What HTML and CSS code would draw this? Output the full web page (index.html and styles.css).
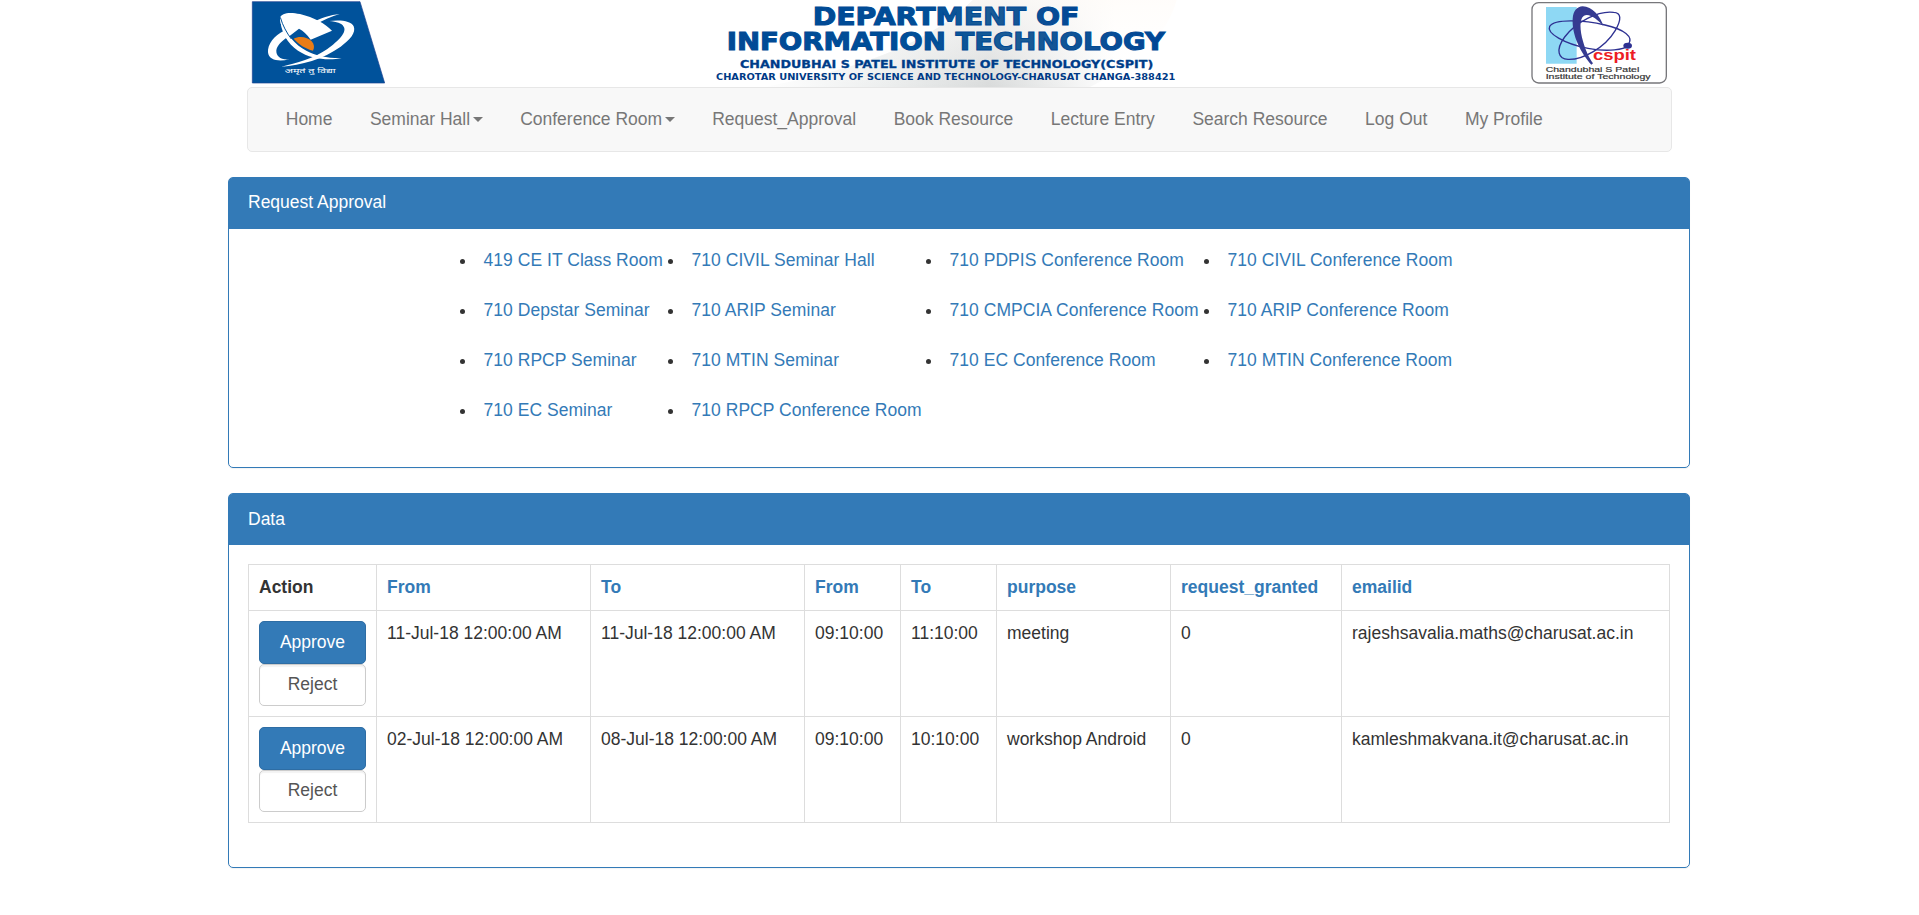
FILE: index.html
```html
<!DOCTYPE html>
<html lang="en">
<head>
<meta charset="utf-8">
<title>Request Approval</title>
<link rel="stylesheet" href="styles.css">
</head>
<body>
<div class="container">
  <header class="banner">
    <svg class="logo-university" viewBox="0 0 450 261">
      <path fill="#00529b" stroke="#1a3f8f" stroke-width="2" d="M22 5H345L419 249H22z"/>
      <g transform="translate(45 24)">
        <path fill="#fff" d="M60 29C64 15 88 11 120 18C162 28 197 48 216 68L152 95C141 79 129 68 117 62L78 92L70 65C64 53 59 40 60 29z"/>
        <path fill="#fff" d="M154 46C180 31 212 20 239 18C216 25 188 36 166 51zM208 39C240 34 275 39 281 55C289 75 269 96 242 116C190 153 123 172 64 176C108 166 164 150 201 124C235 99 262 72 251 56C245 44 230 42 208 39z"/>
        <path fill="#fff" d="M72 68C43 82 22 109 24 133C26 158 59 162 87 154C61 156 48 145 49 127C51 112 66 99 81 88z"/>
        <path fill="#fff" d="M61 29C61 70 82 106 114 128C153 154 207 158 245 150C206 151 168 144 139 128C105 110 77 79 61 29z"/>
        <path fill="none" stroke="#00529b" stroke-width="3" d="M61 28C68 53 80 74 94 93"/>
        <path fill="#e87c16" d="M101 92C118 82 144 87 155 100C163 109 164 119 159 128C136 122 116 109 101 92z"/>
      </g>
      <text class="motto" x="119" y="220" textLength="153" lengthAdjust="spacingAndGlyphs">अमृतं तु विद्या</text>
    </svg>
    <svg class="department" viewBox="0 0 1665 261">
      <defs>
        <linearGradient id="sweep" x1="0" y1="0" x2="1" y2="0">
          <stop offset="0" stop-color="#fff"/>
          <stop offset=".3" stop-color="#eceeee"/>
          <stop offset=".55" stop-color="#d9dbdb"/>
          <stop offset=".85" stop-color="#fff"/>
        </linearGradient>
        <linearGradient id="fade" x1="0" y1="0" x2="0" y2="1">
          <stop offset="0" stop-color="#fffcf9" stop-opacity=".8"/>
          <stop offset="1" stop-color="#fff" stop-opacity="0"/>
        </linearGradient>
        <linearGradient id="ink" x1="0" y1="0" x2="1" y2="0">
          <stop offset="0" stop-color="#004a96"/>
          <stop offset=".45" stop-color="#004f99"/>
          <stop offset=".65" stop-color="#1c5c95"/>
          <stop offset="1" stop-color="#004596"/>
        </linearGradient>
      </defs>
      <path fill="url(#sweep)" d="M250 261Q700 180 880 0H1490Q1450 150 1230 261z"/>
      <path fill="url(#fade)" d="M250 261Q700 180 880 0H1490Q1450 150 1230 261z"/>
      <g class="department-text">
        <text class="line-large" x="398" y="76" textLength="800" lengthAdjust="spacingAndGlyphs">DEPARTMENT OF</text>
        <text class="line-large" x="140" y="151" textLength="1315" lengthAdjust="spacingAndGlyphs">INFORMATION TECHNOLOGY</text>
        <text class="line-medium" x="180" y="204" textLength="1240" lengthAdjust="spacingAndGlyphs">CHANDUBHAI S PATEL INSTITUTE OF TECHNOLOGY(CSPIT)</text>
        <text class="line-small" x="108" y="241" textLength="1378" lengthAdjust="spacingAndGlyphs">CHAROTAR UNIVERSITY OF SCIENCE AND TECHNOLOGY-CHARUSAT CHANGA-388421</text>
      </g>
    </svg>
    <svg class="logo-institute" viewBox="0 0 480 261">
      <rect x="36" y="8" width="403" height="241" rx="20" fill="#fff" stroke="#77777b" stroke-width="4"/>
      <path fill="#8ed8f4" d="M78 21H170V191H78z"/>
      <path fill="#fff" d="M183 58C205 40 222 54 238 74L240 160L198 166C184 128 176 85 183 58z"/>
      <g fill="none" stroke="#2e3192" stroke-width="4">
        <path d="M323 134C346 111 309 87 255 75C188 59 103 57 89 79C79 99 132 131 204 145C266 157 313 148 323 138"/>
        <path d="M281 37C235 31 167 66 134 111C105 151 116 177 144 178C188 180 255 143 286 91C305 58 304 38 281 37z"/>
      </g>
      <path fill="#353b91" d="M158 56C160 32 171 20 188 19C216 19 242 50 250 78C231 57 208 39 192 47C177 56 180 91 189 124C197 153 209 177 219 190L214 194C183 159 155 105 158 56z"/>
      <ellipse cx="323" cy="137" rx="13" ry="9" fill="#2e3192"/>
      <text class="cspit" x="219" y="180" textLength="129" lengthAdjust="spacingAndGlyphs">cspit</text>
      <text class="institute-name" x="77" y="217" textLength="281" lengthAdjust="spacingAndGlyphs">Chandubhai S Patel</text>
      <text class="institute-name" x="77" y="236" textLength="315" lengthAdjust="spacingAndGlyphs">Institute of Technology</text>
    </svg>
  </header>

  <nav class="navbar">
    <a href="#">Home</a>
    <a href="#">Seminar Hall<span class="caret"></span></a>
    <a href="#">Conference Room<span class="caret"></span></a>
    <a href="#">Request_Approval</a>
    <a href="#">Book Resource</a>
    <a href="#">Lecture Entry</a>
    <a href="#">Search Resource</a>
    <a href="#">Log Out</a>
    <a href="#">My Profile</a>
  </nav>

  <section class="panel panel-rooms">
    <div class="panel-heading">Request Approval</div>
    <div class="rooms">
      <ul>
        <li><a href="#">419 CE IT Class Room</a></li>
        <li><a href="#">710 Depstar Seminar</a></li>
        <li><a href="#">710 RPCP Seminar</a></li>
        <li><a href="#">710 EC Seminar</a></li>
      </ul>
      <ul>
        <li><a href="#">710 CIVIL Seminar Hall</a></li>
        <li><a href="#">710 ARIP Seminar</a></li>
        <li><a href="#">710 MTIN Seminar</a></li>
        <li><a href="#">710 RPCP Conference Room</a></li>
      </ul>
      <ul>
        <li><a href="#">710 PDPIS Conference Room</a></li>
        <li><a href="#">710 CMPCIA Conference Room</a></li>
        <li><a href="#">710 EC Conference Room</a></li>
      </ul>
      <ul>
        <li><a href="#">710 CIVIL Conference Room</a></li>
        <li><a href="#">710 ARIP Conference Room</a></li>
        <li><a href="#">710 MTIN Conference Room</a></li>
      </ul>
    </div>
  </section>

  <section class="panel panel-data">
    <div class="panel-heading">Data</div>
    <div class="panel-body">
      <table class="requests">
        <colgroup>
          <col class="col-action"><col class="col-date"><col class="col-date"><col class="col-time"><col class="col-time"><col class="col-purpose"><col class="col-granted"><col class="col-email">
        </colgroup>
        <thead>
          <tr><th>Action</th><th><a href="#">From</a></th><th><a href="#">To</a></th><th><a href="#">From</a></th><th><a href="#">To</a></th><th><a href="#">purpose</a></th><th><a href="#">request_granted</a></th><th><a href="#">emailid</a></th></tr>
        </thead>
        <tbody>
          <tr>
            <td><button class="btn btn-primary">Approve</button><button class="btn btn-default">Reject</button></td>
            <td>11-Jul-18 12:00:00 AM</td><td>11-Jul-18 12:00:00 AM</td><td>09:10:00</td><td>11:10:00</td><td>meeting</td><td>0</td><td>rajeshsavalia.maths@charusat.ac.in</td>
          </tr>
          <tr>
            <td><button class="btn btn-primary">Approve</button><button class="btn btn-default">Reject</button></td>
            <td>02-Jul-18 12:00:00 AM</td><td>08-Jul-18 12:00:00 AM</td><td>09:10:00</td><td>10:10:00</td><td>workshop Android</td><td>0</td><td>kamleshmakvana.it@charusat.ac.in</td>
          </tr>
        </tbody>
      </table>
    </div>
  </section>
</div>
</body>
</html>
```
FILE: styles.css
```css
* { box-sizing: border-box; }
body {
  margin: 0;
  background: #fff;
  color: #333;
  font: 17.5px/25px "Liberation Sans", Arial, sans-serif;
}
a { color: #337ab7; text-decoration: none; }
.container { width: 1462px; margin: 0 auto 0 228px; }

.banner {
  display: flex;
  justify-content: space-between;
  height: 87px;
  margin: 0 10px 0 17px;
}
.banner svg { display: block; height: 87px; }
.logo-university { width: 150px; }
.department { width: 555px; }
.logo-institute { width: 160px; }
.motto { font: 20px "Noto Sans", "Noto Sans Devanagari", sans-serif; fill: #fff; }
.department-text {
  font-family: "DejaVu Sans", sans-serif;
  font-weight: bold;
  fill: url(#ink);
  stroke: #004a94;
}
.line-large { font-size: 72px; stroke-width: 3px; }
.line-medium { font-size: 34px; fill: #003a86; stroke-width: 1px; }
.line-small { font-size: 26px; fill: #003a86; stroke-width: 0; }
.cspit { font: bold 46px "Liberation Sans", sans-serif; fill: #ed1c24; }
.institute-name { font: 21px "Liberation Sans", sans-serif; fill: #333; stroke: #333; stroke-width: .5px; }

.navbar {
  display: flex;
  height: 65px;
  margin: 0 18px 25px 19px;
  padding: 18.5px 0 0 19px;
  background: #f8f8f8;
  border: 1px solid #e7e7e7;
  border-radius: 5px;
}
.navbar a { padding: 0 18.75px; color: #777; }
.caret {
  display: inline-block;
  border: 5px solid transparent;
  border-top-color: #777;
  border-bottom: 0;
  margin-left: 2.5px;
  vertical-align: middle;
}

.panel {
  margin-bottom: 25px;
  border: 1px solid #337ab7;
  border-radius: 5px;
  box-shadow: 0 1px 1px rgba(0, 0, 0, .05);
}
.panel-rooms { height: 291px; }
.panel-data { height: 375px; }
.panel-heading {
  height: 51px;
  padding: 12px 19px;
  background: #337ab7;
  color: #fff;
  border-radius: 3px 3px 0 0;
}
.panel-data .panel-heading { padding-top: 13px; }
.rooms {
  display: grid;
  grid-template-columns: 208px 258px 278px 260px;
  padding: 19px 0 0 230px;
}
.rooms ul { margin: 0; padding: 0; list-style: none; }
.rooms li { display: flex; align-items: center; height: 25px; margin-bottom: 25px; white-space: nowrap; letter-spacing: .04px; }
.rooms li::before {
  content: "";
  width: 5px;
  height: 5px;
  margin: 2px 18.5px 0 1px;
  border-radius: 50%;
  background: #333;
}

.panel-body { padding: 19px 19px 0; }
.requests { width: 1422px; border-collapse: collapse; table-layout: fixed; }
.requests th, .requests td {
  padding: 10px;
  border: 1px solid #ddd;
  text-align: left;
  vertical-align: top;
}
.requests th { height: 46px; }
.requests td { height: 106px; }
.col-action { width: 128px; }
.col-date { width: 214px; }
.col-time { width: 96px; }
.col-purpose { width: 174px; }
.col-granted { width: 171px; }
.btn {
  display: block;
  width: 107px;
  padding: 0;
  font: inherit;
  border-radius: 5px;
}
.btn-primary { height: 43px; color: #fff; background: #337ab7; border: 1px solid #2e6da4; }
.btn-default { height: 42px; padding-bottom: 2px; color: #555; background: #fff; border: 1px solid #ccc; box-shadow: inset 0 2px 1px rgba(0, 0, 0, .05); }
```
